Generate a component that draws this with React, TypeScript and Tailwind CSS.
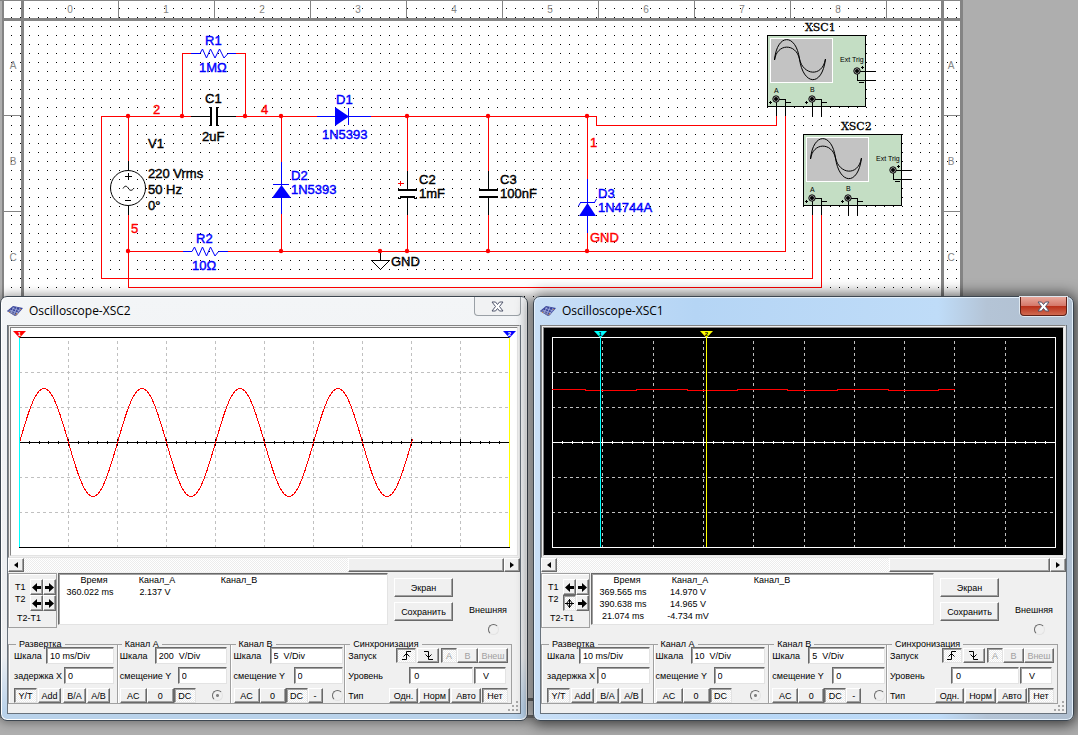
import type { ReactNode } from 'react';

const RAISED =
  'border border-t-white border-l-white border-r-[#696969] border-b-[#696969] bg-[#f0f0f0] shadow-[inset_-1px_-1px_0_#a0a0a0]';
const SUNKEN =
  'border border-t-[#696969] border-l-[#696969] border-r-[#e3e3e3] border-b-[#e3e3e3] shadow-[inset_1px_1px_0_#a0a0a0]';
const HATCH =
  'bg-[repeating-conic-gradient(#ffffff_0%_25%,#ececec_0%_50%)] bg-[length:2px_2px]';

const COLUMNS = [0, 1, 2, 3, 4, 5, 6, 7, 8];
const ROWS = ['A', 'B', 'C'];

const JUNCTIONS = [
  [128, 116],
  [182, 116],
  [245, 116],
  [281, 116],
  [407, 116],
  [488, 116],
  [587, 116],
  [128, 251],
  [281, 251],
  [380, 251],
  [407, 251],
  [488, 251],
  [587, 251],
];

const LABELS: { x: number; y: number; text: string; color: string }[] = [
  { x: 205, y: 45, text: 'R1', color: '#0000ff' },
  { x: 199, y: 72, text: '1MΩ', color: '#0000ff' },
  { x: 205, y: 103, text: 'C1', color: '#000' },
  { x: 202, y: 141, text: '2uF', color: '#000' },
  { x: 153, y: 114, text: '2', color: '#ff0000' },
  { x: 261, y: 114, text: '4', color: '#ff0000' },
  { x: 336, y: 104, text: 'D1', color: '#0000ff' },
  { x: 322, y: 139, text: '1N5393', color: '#0000ff' },
  { x: 148, y: 148, text: 'V1', color: '#000' },
  { x: 148, y: 178, text: '220 Vrms', color: '#000' },
  { x: 148, y: 194, text: '50 Hz', color: '#000' },
  { x: 148, y: 210, text: '0°', color: '#000' },
  { x: 131, y: 233, text: '5', color: '#ff0000' },
  { x: 291, y: 180, text: 'D2', color: '#0000ff' },
  { x: 291, y: 194, text: '1N5393', color: '#0000ff' },
  { x: 196, y: 243, text: 'R2', color: '#0000ff' },
  { x: 192, y: 270, text: '10Ω', color: '#0000ff' },
  { x: 419, y: 184, text: 'C2', color: '#000' },
  { x: 419, y: 198, text: '1mF', color: '#000' },
  { x: 500, y: 184, text: 'C3', color: '#000' },
  { x: 500, y: 198, text: '100nF', color: '#000' },
  { x: 590, y: 147, text: '1', color: '#ff0000' },
  { x: 598, y: 198, text: 'D3', color: '#0000ff' },
  { x: 598, y: 212, text: '1N4744A', color: '#0000ff' },
  { x: 590, y: 242, text: 'GND', color: '#ff0000' },
  { x: 391, y: 266, text: 'GND', color: '#000' },
];

function Terminal({ x, y }: { x: number; y: number }) {
  return (
    <g>
      <circle cx={x} cy={y} r="3.2" fill="#c3c3c3" stroke="#000" />
      <circle cx={x} cy={y} r="2" fill="#000" />
    </g>
  );
}

function ScopeSymbol({ x, y, name }: { x: number; y: number; name: string }) {
  return (
    <g transform={`translate(${x} ${y})`}>
      <text x="38" y="-4" fontSize="11" fontFamily="'DejaVu Serif', serif" stroke="#000" strokeWidth="0.3">
        {name}
      </text>
      <rect x="0.5" y="0.5" width="98" height="71" fill="#c4dec4" stroke="#000" />
      <rect x="3.5" y="3.5" width="62" height="44" fill="#c3c3c3" stroke="#fff" />
      <g fill="none" stroke="#000">
        <path d="M7.500 25C10 -2 29 -2 32.500 24S55 53 58.500 24" />
        <path d="M7.500 25C10 8 29 8 32.500 24S55 43 58.500 24" />
      </g>
      <g fill="none" stroke="#000" shapeRendering="crispEdges">
        <path d="M90 36.500H109M90.500 36V45.500H109" />
        <path d="M9.500 64V81M9 64.500H18.500V81" />
        <path d="M45.500 64V81M45 64.500H54.500V81" />
        <path d="M92 47.500H97M19 67.500H24M55 67.500H60" />
        <path d="M2 67.500H5M3.500 66V69M38 67.500H41M39.500 66V69M94 32.500H97M95.500 31V34" />
      </g>
      <Terminal x={9} y={64} />
      <Terminal x={45} y={64} />
      <Terminal x={90} y={36} />
      <g fontSize="7" fontFamily="'Liberation Sans', sans-serif">
        <text x="7" y="58">A</text>
        <text x="43" y="57">B</text>
        <text x="73" y="27">Ext Trig</text>
      </g>
    </g>
  );
}

function Schematic() {
  return (
    <svg width="963" height="718" className="block" role="img" aria-label="Schematic">
      <defs>
        <pattern id="dots" x="2" y="8" width="9" height="9" patternUnits="userSpaceOnUse">
          <rect width="1" height="1" fill="#000" />
        </pattern>
      </defs>
      <rect width="963" height="718" fill="#fff" />
      <rect x="4" width="957" height="718" fill="url(#dots)" shapeRendering="crispEdges" />
      <g fill="#848484" shapeRendering="crispEdges">
        <rect width="2" height="718" fill="#aeaeae" />
        <rect x="2" width="2" height="718" />
        <rect width="963" height="1" />
        <rect y="18" x="4" width="959" height="3" />
        <rect x="21" width="3" height="718" />
        <rect x="941" width="3" height="718" />
        <rect x="960" width="3" height="718" />
        <rect y="698" width="963" height="3" />
        <rect y="715" width="963" height="3" />
        {COLUMNS.map((c) => (
          <rect key={c} x={118 + c * 96} width="1" height="18" />
        ))}
        {[115, 211].map((y) => (
          <g key={y}>
            <rect x="4" y={y} width="17" height="1" />
            <rect x="944" y={y} width="16" height="1" />
          </g>
        ))}
      </g>
      <g fontSize="10" fill="#848484" textAnchor="middle" fontFamily="'Liberation Sans', sans-serif">
        {COLUMNS.map((c) => (
          <text key={c} x={70 + c * 96} y="13">
            {c}
          </text>
        ))}
        {ROWS.map((r, i) => (
          <g key={r}>
            <text x="13" y={69 + i * 96}>
              {r}
            </text>
            <text x="951" y={69 + i * 96}>
              {r}
            </text>
          </g>
        ))}
      </g>

      <g fill="none" stroke="#ff0000" shapeRendering="crispEdges">
        <path d="M191 116.500H101.500V278.500H812.500V215" />
        <path d="M128.500 116V161M128.500 215V287.500H821.500V215" />
        <path d="M128 251.500H183M228 251.500H785.500V116" />
        <path d="M182.500 116V53.500H191M236 53.500H245.500V116" />
        <path d="M236 116.500H317M371 116.500H596.500V125.500H776.500V116" />
        <path d="M281.500 116V162M281.500 214V251" />
        <path d="M407.500 116V171M407.500 215V251M488.500 116V171M488.500 215V251" />
        <path d="M587.500 116V179M587.500 233V251" />
        <path d="M398 183.500H404M400.500 181V186" />
      </g>
      <g fill="none" stroke="#0000ff">
        <g shapeRendering="crispEdges">
          <path d="M191 53.500H200M228 53.500H236M183 251.500H192M219 251.500H228" />
          <path d="M317 116.500H371M348.500 108V125" />
          <path d="M281.500 162V214M273 184.500H289" />
          <path d="M587.500 179V233M580 202.500H595" />
        </g>
        <path d="M200 53.500L202.500 49L206.500 58L210.500 49L215 58L219.500 49L224 58L228 53.500" />
        <path d="M192 251.500L194.500 247L198.500 256L202.500 247L206.500 256L210.500 247L215 256L218.500 251.500" />
        <path d="M580.500 202.500L578.500 206M594.500 202.500L596.500 199" />
      </g>
      <g fill="#0000ff">
        <polygon points="335,107 335,126 349,116.500" />
        <polygon points="272,198 281.500,185 291,198" />
        <polygon points="579,216 587.500,203 596,216" />
      </g>
      <g fill="none" stroke="#000">
        <g shapeRendering="crispEdges">
          <path d="M191 116.500H210M218 116.500H236" />
          <path d="M128.500 161V170M128.500 206V215" />
          <path d="M407.500 171V190M407.500 198V215M488.500 171V190M488.500 197V215" />
          <path d="M211 107V126M217 107V126" strokeWidth="2" />
          <path d="M398 190H417M479 190H498M479 197H498M400 197H415" strokeWidth="2" />
          <path d="M398 198.500H401M414 198.500H417" />
          <path d="M125 176.500H132M128.500 173V180M125 200.500H131" />
          <path d="M380.500 251V260M371 260.500H390" />
        </g>
        <circle cx="128" cy="188" r="17.500" />
        <path d="M123 188.500C125 185 127 186 128.500 188.500S132 191 134 188" />
        <path d="M371.500 260.500L380.500 269.500L389.500 260.500" />
      </g>
      {JUNCTIONS.map(([x, y]) => (
        <circle key={`${x}-${y}`} cx={x} cy={y} r="2.200" fill="#ff0000" />
      ))}
      <ScopeSymbol x={767} y={35} name="XSC1" />
      <ScopeSymbol x={803} y={134} name="XSC2" />
      <g fontSize="13" fontFamily="'Liberation Sans', sans-serif" strokeWidth="0.4">
        {LABELS.map((l) => (
          <text key={`${l.x}-${l.y}`} x={l.x} y={l.y} fill={l.color} stroke={l.color}>
            {l.text}
          </text>
        ))}
      </g>
    </svg>
  );
}

interface Cursor {
  x: number;
  label: string;
  line: string;
  flag: string;
  ink: string;
}

interface PlotProps {
  viewBox: string;
  left: number;
  right: number;
  dark?: boolean;
  trace: string;
  cursors: Cursor[];
}

function Plot({ viewBox, left, right, dark = false, trace, cursors }: PlotProps) {
  const ink = dark ? '#fff' : '#000';
  const step = (right - left) / 10;
  const ticks = Array.from({ length: 49 }, (_, i) => i + 1);

  return (
    <svg
      viewBox={viewBox}
      className={dark ? 'block h-[227px] w-full bg-black' : 'block h-[227px] w-full bg-white'}
      role="img"
      aria-label="Waveform"
    >
      <g fill="none" shapeRendering="crispEdges">
        <g stroke="#c0c0c0" strokeDasharray="3 3">
          {[1, 2, 3, 4, 5, 6, 7, 8, 9].map((i) => {
            const x = Math.round(left + i * step) + 0.5;
            return <path key={i} d={`M${x} 341V547`} />;
          })}
          {[372, 407, 477, 512].map((y) => (
            <path key={y} d={`M${left} ${y + 0.5}H${right}`} />
          ))}
        </g>
        <g stroke={ink}>
          <path d={`M${left} 442.500H${right}`} />
          {ticks.map((i) => {
            const x = Math.round(left + (i * step) / 5) + 0.5;
            return <path key={i} d={i % 5 === 0 ? `M${x} 439V446` : `M${x} 441V444`} />;
          })}
          <path d={`M${left + 0.5} 337.500H${right + 0.5}V547.500H${left + 0.5}Z`} />
        </g>
        <path d={trace} stroke="#ff0000" />
      </g>
      {cursors.map((c) => (
        <g key={c.label}>
          <path d={`M${c.x + 0.5} 337V547`} stroke={c.line} shapeRendering="crispEdges" />
          <polygon points={`${c.x - 6},331 ${c.x + 7},331 ${c.x + 0.5},338`} fill={c.flag} />
          <text
            x={c.x + 0.5}
            y="336"
            fontSize="6"
            fontWeight="bold"
            textAnchor="middle"
            fill={c.ink}
            fontFamily="'Liberation Sans', sans-serif"
          >
            {c.label}
          </text>
        </g>
      ))}
    </svg>
  );
}

function AppIcon() {
  return (
    <svg width="16" height="12" viewBox="0 0 16 12" aria-hidden="true">
      <polygon points="0,6 6,1 16,3 10,10 8,11" fill="#39459a" />
      <path d="M0 6L8 11L10 10L3 5Z" fill="#6d73a8" />
      <path d="M3 5L11 8M5 3L13 6M7 2L4 8M10 2L7 9M13 3L10 9" stroke="#b4bee8" strokeWidth="0.7" />
      <path d="M2 7L3 8M9 10L10 8M13 4L14 5" stroke="#c98a4b" />
    </svg>
  );
}

interface PushProps {
  children: ReactNode;
  className: string;
  pressed?: boolean;
  disabled?: boolean;
  label?: string;
}

function Push({ children, className, pressed = false, disabled = false, label }: PushProps) {
  return (
    <button
      type="button"
      disabled={disabled}
      aria-label={label}
      aria-pressed={pressed}
      className={`flex h-full shrink-0 items-center justify-center whitespace-nowrap ${
        pressed ? `${SUNKEN} ${HATCH}` : RAISED
      } ${disabled ? 'text-[#a0a0a0]' : 'text-black'} ${className}`}
    >
      {children}
    </button>
  );
}

function Radio({ label, checked = false }: { label: string; checked?: boolean }) {
  return (
    <input
      type="radio"
      aria-label={label}
      defaultChecked={checked}
      className="m-0 size-[11px] shrink-0 appearance-none rounded-full border border-t-[#696969] border-r-[#e3e3e3] border-b-[#e3e3e3] border-l-[#696969] bg-[#f0f0f0] checked:bg-[radial-gradient(circle,#808080_0_1px,#f0f0f0_2px)]"
    />
  );
}

interface FieldProps {
  label: string;
  value: string;
  labelWidth: string;
}

function Field({ label, value, labelWidth }: FieldProps) {
  return (
    <label className="flex h-[17px] items-center">
      <span className={`shrink-0 whitespace-nowrap ${labelWidth}`}>{label}</span>
      <input
        type="text"
        defaultValue={value}
        className={`h-full w-0 min-w-0 flex-1 bg-white pl-[3px] ${SUNKEN}`}
      />
    </label>
  );
}

function Group({ title, className, children }: { title: string; className: string; children: ReactNode }) {
  return (
    <fieldset
      className={`min-w-0 border-t border-b border-l border-[#a0a0a0] shadow-[inset_1px_0_0_#ffffff] ${className}`}
    >
      <legend className="ml-0.5 h-1.5 px-[3px] leading-[6px]">{title}</legend>
      <div className="flex flex-col gap-[3px]">{children}</div>
    </fieldset>
  );
}

function EdgeIcon({ falling = false }: { falling?: boolean }) {
  return (
    <svg width="11" height="9" viewBox="0 0 11 9" fill="none" stroke="#000" aria-hidden="true">
      {falling ? (
        <path d="M1 0.500H5.500V8.500H10M2.500 3.500L5.500 6.500L8.500 3.500" />
      ) : (
        <path d="M1 8.500H5.500V0.500H10M2.500 5.500L5.500 2.500L8.500 5.500" />
      )}
    </svg>
  );
}

function Arrow({ right = false, both = false }: { right?: boolean; both?: boolean }) {
  return (
    <svg width="9" height="9" viewBox="0 0 9 9" className="shrink-0" aria-hidden="true">
      {both ? (
        <path
          d="M4.500 0.500L7.500 4.500L4.500 8.500L1.500 4.500ZM0 4.500H9M4.500 0V9"
          fill="none"
          stroke="#000"
        />
      ) : right ? (
        <path d="M0 3H4V0L9 4.500L4 9V6H0Z" />
      ) : (
        <path d="M9 3H5V0L0 4.500L5 9V6H9Z" />
      )}
    </svg>
  );
}

function ScrollBar() {
  return (
    <div className={`flex h-3.5 ${HATCH}`}>
      <button type="button" aria-label="Scroll left" className={`flex w-4 items-center justify-center ${RAISED}`}>
        <svg width="4" height="6" aria-hidden="true">
          <polygon points="4,0 4,6 0,3" />
        </svg>
      </button>
      <div className="flex-[65]" />
      <div className={`flex-[31] ${RAISED}`} />
      <button type="button" aria-label="Scroll right" className={`flex w-4 items-center justify-center ${RAISED}`}>
        <svg width="4" height="6" aria-hidden="true">
          <polygon points="0,0 0,6 4,3" />
        </svg>
      </button>
    </div>
  );
}

interface ScopeProps {
  name: string;
  active?: boolean;
  className: string;
  plot: PlotProps;
  readings: string[][];
  scaleA: string;
}

function ScopeWindow({ name, active = false, className, plot, readings, scaleA }: ScopeProps) {
  return (
    <section
      aria-label={`Oscilloscope-${name}`}
      className={`absolute flex flex-col rounded-[7px] border border-[#3c4650] px-1.5 pb-1.5 ${
        active
          ? 'bg-[linear-gradient(90deg,#c9dff6_0,#b5d5f5_30%,#bfdcf8_75%,#b4c4d6_84%,#b0bfd0_100%)] shadow-[inset_0_0_0_1px_#e4f0fb,0_1px_14px_3px_rgba(0,0,0,0.65)]'
          : 'bg-[linear-gradient(180deg,#f3f5f7_0,#eceef0_85%,#b9d2ea_98%)] shadow-[inset_0_0_0_1px_#ffffff,0_0_10px_2px_rgba(0,0,0,0.35)]'
      } ${className}`}
    >
      <header className="flex h-7 items-start justify-between">
        <div className="flex items-center gap-1.5 pt-1">
          <AppIcon />
          <h2 className="font-['Open_Sans',sans-serif] text-[12px] leading-5">Oscilloscope-{name}</h2>
        </div>
        <button
          type="button"
          aria-label="Close"
          className={`flex h-[19px] w-[47px] items-center justify-center rounded-b-[4px] border border-t-0 ${
            active
              ? 'border-[#5e1f16] bg-[linear-gradient(180deg,#e9a99d_0,#d5786a_48%,#b9301a_52%,#d06a50_100%)] shadow-[0_0_0_1px_#dfe8f0]'
              : 'border-[#9aa0a6] bg-[#f1f2f3]'
          }`}
        >
          <svg width="13" height="11" viewBox="0 0 13 11" aria-hidden="true">
            <path
              d="M1 1H4.500L6.500 3.500L8.500 1H12L8.500 5.500L12 10H8.500L6.500 7.500L4.500 10H1L4.500 5.500Z"
              fill="#fff"
              stroke="#50566c"
            />
          </svg>
        </button>
      </header>

      <div className="bg-[#f0f0f0] px-px pb-px font-['Liberation_Sans',sans-serif] text-[9px] leading-3 text-black shadow-[inset_0_0_0_1px_#68727c]">
        <div className="border-[3px] border-t-[#848484] border-r-[#e3e3e3] border-b-[#e3e3e3] border-l-[#848484] border-double">
          <Plot {...plot} />
        </div>
        <ScrollBar />

        <div className="mt-px flex h-[55px] items-start gap-px">
          <div className="flex h-full w-[49px] flex-col border border-[#a0a0a0] pt-[5px] shadow-[inset_1px_1px_0_#ffffff]">
            <div className="flex h-4 items-center pl-1.5">
              <span className="w-[15px]">T1</span>
              <Push className="w-[13px]" label="T1 left">
                <Arrow />
              </Push>
              <Push className="w-[13px]" label="T1 right">
                <Arrow right />
              </Push>
            </div>
            <div className="flex h-4 items-start pl-1.5">
              <span className="w-[15px] leading-2">T2</span>
              <Push className="w-[13px]" label="T2 left" pressed={active}>
                <Arrow both={active} />
              </Push>
              <Push className="w-[13px]" label="T2 right">
                <Arrow right />
              </Push>
            </div>
            <span className="pt-px pl-2">T2-T1</span>
          </div>
          <div className={`h-[52px] flex-1 bg-white ${SUNKEN}`}>
            <table className="table-fixed whitespace-nowrap text-center">
              <thead>
                <tr>
                  <th className="w-[70px] p-0 font-normal">Время</th>
                  <th className="w-14 p-0 font-normal">Канал_A</th>
                  <th className="w-[108px] p-0 font-normal">Канал_B</th>
                </tr>
              </thead>
              <tbody>
                {readings.map(([time, a]) => (
                  <tr key={time}>
                    <td className="p-0 pr-2">{time}</td>
                    <td className="p-0 pr-1">{a}</td>
                    <td className="p-0" />
                  </tr>
                ))}
              </tbody>
            </table>
          </div>
          <div className="flex w-[131px] items-start gap-4 pt-[5px] pl-[5px]">
            <div className="flex flex-col gap-[5px]">
              <div className="h-[19px]">
                <Push className="w-[59px]">Экран</Push>
              </div>
              <div className="h-[19px]">
                <Push className="w-[59px]">Сохранить</Push>
              </div>
            </div>
            <div className="flex flex-col items-center gap-2 pt-[26px]">
              <span>Внешняя</span>
              <div className="flex pl-3">
                <Radio label="Внешняя" />
              </div>
            </div>
          </div>
        </div>

        <div className="mt-[13px] grid grid-cols-[109fr_113fr_115fr_168fr] pr-2">
          <Group title="Развертка" className="pr-[3px] pl-[5px]">
            <Field label="Шкала" value="10 ms/Div" labelWidth="w-8" />
            <Field label="задержка X" value="0" labelWidth="w-[50px]" />
            <div className="mt-px flex h-[15px] gap-px">
              <Push className="w-[23px]" pressed>
                Y/T
              </Push>
              <Push className="w-[23px]">Add</Push>
              <Push className="ml-px w-[23px]">B/A</Push>
              <Push className="w-[23px]">A/B</Push>
            </div>
          </Group>
          <Group title="Канал A" className="pr-[3px] pl-0.5">
            <Field label="Шкала" value={scaleA} labelWidth="w-[35px]" />
            <Field label="смещение Y" value="0" labelWidth="w-[58px]" />
            <div className="mt-px flex h-[15px] items-center">
              <Push className="w-[27px]">AC</Push>
              <Push className="w-[27px]">0</Push>
              <Push className="w-[22px]" pressed>
                DC
              </Push>
              <div className="ml-auto flex pr-1">
                <Radio label="Канал A" checked />
              </div>
            </div>
          </Group>
          <Group title="Канал B" className="pr-px pl-[3px]">
            <Field label="Шкала" value="5  V/Div" labelWidth="w-9" />
            <Field label="смещение Y" value="0" labelWidth="w-[60px]" />
            <div className="mt-px flex h-[15px] items-center">
              <Push className="w-[26px]">AC</Push>
              <Push className="w-[26px]">0</Push>
              <Push className="w-[22px]" pressed>
                DC
              </Push>
              <Push className="w-[15px]">-</Push>
              <div className="ml-auto flex">
                <Radio label="Канал B" />
              </div>
            </div>
          </Group>
          <Group title="Синхронизация" className="border-r pr-[3px] pl-[3px]">
            <div className="flex h-[17px] items-center py-px">
              <span className="mr-auto">Запуск</span>
              <Push className="w-5" label="Rising edge" pressed>
                <EdgeIcon />
              </Push>
              <Push className="ml-px w-[22px]" label="Falling edge">
                <EdgeIcon falling />
              </Push>
              <Push className="ml-0.5 w-4" pressed disabled>
                A
              </Push>
              <Push className="w-[21px]" disabled>
                B
              </Push>
              <Push className="w-[30px]" disabled>
                Внеш
              </Push>
            </div>
            <div className="flex h-[17px] items-center pr-0.5">
              <label htmlFor={`level-${name}`} className="w-[61px] shrink-0">
                Уровень
              </label>
              <input
                id={`level-${name}`}
                type="text"
                defaultValue="0"
                className={`h-full w-0 min-w-0 flex-1 bg-white pl-1 ${SUNKEN}`}
              />
              <input
                type="text"
                aria-label="Единица"
                defaultValue="V"
                className={`ml-px h-full w-8 bg-white pl-2 ${SUNKEN}`}
              />
            </div>
            <div className="mt-px flex h-[15px] items-center gap-px">
              <span className="mr-auto">Тип</span>
              <Push className="w-[29px]">Одн.</Push>
              <Push className="w-[31px]">Норм</Push>
              <Push className="w-[30px]">Авто</Push>
              <Push className="w-[26px]" pressed>
                Нет
              </Push>
            </div>
          </Group>
        </div>
        <div className="flex h-[9px] items-end justify-end">
          <svg width="12" height="12" className="-mt-1 overflow-visible" fill="#a8a8a8" aria-hidden="true">
            <path d="M8 0h2v2h-2zM4 4h2v2h-2zM8 4h2v2h-2zM0 8h2v2h-2zM4 8h2v2h-2zM8 8h2v2h-2z" />
          </svg>
        </div>
      </div>
    </section>
  );
}

// four periods plus a little, 98px each
const SINE = Array.from({ length: 394 }, (_, i) => {
  const y = 442.5 - 54 * Math.sin((2 * Math.PI * i) / 98);
  return `${i === 0 ? 'M' : 'L'}${19.5 + i} ${y.toFixed(1)}`;
}).join('');

const RIPPLE =
  'M552 389.500H585V390.500H636V389.500H687V390.500H737V389.500H787V390.500H837V389.500H888V390.500H938V389.500H955';

export default function App() {
  return (
    <main className="relative min-h-screen overflow-hidden bg-[#aeaeae]">
      <Schematic />
      <ScopeWindow
        name="XSC2"
        className="top-[296px] left-0 w-[528px]"
        scaleA="200  V/Div"
        readings={[['360.022 ms', '2.137 V']]}
        plot={{
          viewBox: '11 328 506 227',
          left: 19,
          right: 509,
          trace: SINE,
          cursors: [
            { x: 19, label: '1', line: '#00ffff', flag: '#ff0000', ink: '#fff' },
            { x: 509, label: '2', line: '#ffff00', flag: '#0000ff', ink: '#fff' },
          ],
        }}
      />
      <ScopeWindow
        name="XSC1"
        active
        className="top-[296px] left-[533px] w-[541px]"
        scaleA="10  V/Div"
        readings={[
          ['369.565 ms', '14.970 V'],
          ['390.638 ms', '14.965 V'],
          ['21.074 ms', '-4.734 mV'],
        ]}
        plot={{
          viewBox: '544 328 519 227',
          left: 552,
          right: 1055,
          dark: true,
          trace: RIPPLE,
          cursors: [
            { x: 600, label: '1', line: '#00ffff', flag: '#00ffff', ink: '#000' },
            { x: 706, label: '2', line: '#ffff00', flag: '#ffff00', ink: '#000' },
          ],
        }}
      />
    </main>
  );
}
